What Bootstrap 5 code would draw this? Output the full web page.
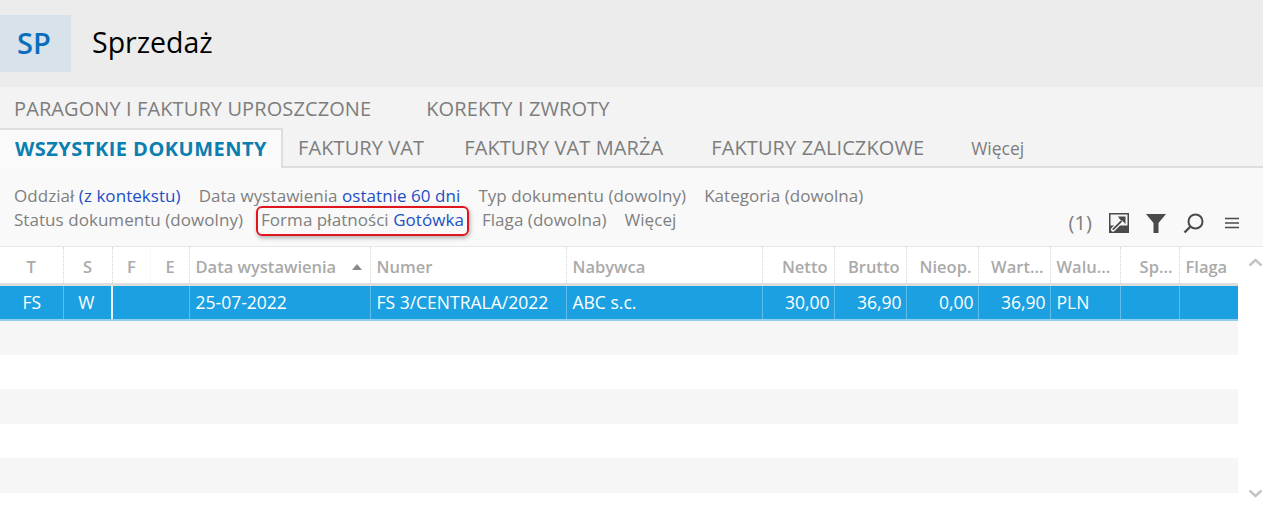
<!DOCTYPE html>
<html lang="pl"><head><meta charset="utf-8"><title>Sprzedaż</title>
<link href="https://cdn.jsdelivr.net/npm/bootstrap@5.3.0/dist/css/bootstrap.min.css" rel="stylesheet">
<style>
html,body{height:507px;overflow:hidden}
body{background:#fff;font-family:"Open Sans","Noto Sans",sans-serif;font-size:16px;color:#7a7a7a}
.topband{height:87px;background:#ececec;padding-top:15px}
.appbadge{width:71px;height:57px;background:#d7e2ea;color:#0a6ebd;font-size:29px;font-weight:600;padding-right:3px;padding-bottom:2px}
.apptitle{color:#000;font-size:28.500px;margin-left:21px;line-height:54px}
.tabband{height:81px;background:#f3f3f3;border-bottom:2px solid #dedede}
.tabrow{font-size:20px;color:#7d7d7d;letter-spacing:.1px}
.tabrow span{white-space:nowrap}
.t1{height:41px;padding:7px 0 0 14px;gap:55px}
.t2{height:40px}
.acttab{width:283px;height:40px;background:#fafafa;border:2px solid #dedede;border-bottom:0;border-left:0;color:#0a7fb0;font-weight:700;padding:0 0 0 15px;line-height:38px;letter-spacing:.48px;white-space:nowrap;box-sizing:border-box}
.t2 .x{line-height:40px;padding-left:15px}
.t2 .x2{padding-left:40px}
.t2 .x3{padding-left:48px}
.t2 .x4{padding-left:47px;font-size:17.500px;letter-spacing:0}
.filterband{height:79px;background:#f9f9f9;padding:16px 14px 0;font-size:17px;line-height:24px;position:relative;border-bottom:1px solid #e9e9e9;color:#808080;letter-spacing:.05px}
.fline{gap:18px;white-space:nowrap}
.fline b{font-weight:400;color:#1c4fc4}
.hilite{border:2px solid #e0161e;border-radius:6px;box-shadow:1px 2px 4px rgba(0,0,0,.3);padding:0 3px;margin:-2px -5px -4px -5px;height:30px;line-height:24px}
.tools{position:absolute;right:24px;top:45px;height:20px}
.tools svg{margin-left:17px}
.tools svg.mn{margin-left:21px}
.cnt{font-size:20px;color:#7d7d7d}
table.gridtbl{table-layout:fixed;width:1238px;margin:0;border-collapse:collapse;font-size:17.500px}
.gridtbl th,.gridtbl td{padding:0 5px 0 6px;white-space:nowrap;overflow:hidden;box-shadow:none;border:0}
.gridtbl thead th{height:37px;color:#aaa;font-weight:600;background:#fff;border-bottom:3px solid #dedede;border-right:1px dotted #d4d4d4;font-size:16.500px;vertical-align:middle;padding-top:5px}
.gridtbl thead th.endn{padding-right:6px}
.gridtbl thead th.ctr{padding-right:6px;padding-left:6px}
.gridtbl thead th.quiet{border-right-color:#f0f0f0}
.gridtbl thead th:last-child{border-right:0}
.gridtbl tbody td{height:34.600px;padding-top:0;padding-bottom:0;vertical-align:middle}
.gridtbl tbody td.text-end{padding-right:4px}
.gridtbl tbody tr.sel td{height:36px;background:#1ba1e2;color:#fff;border-right:1px solid #5dbdeb;border-bottom:2px solid #8fd0f0}
.gridtbl tbody tr.sel td.wedge{border-right:2px solid #e8f5fc;padding-right:7px;padding-left:5px}
.gridtbl tbody tr.sel td.quiet{border-right-color:#1ba1e2}
.gridtbl tbody tr.sel td:last-child{border-right:0}
.gridtbl tbody tr.sel td.wl{font-weight:500}
.gridtbl tbody tr.alt td{background:#f6f6f6}
.gridtbl tbody tr.pl td{background:#fff}
.sortmark{display:inline-block;border:5.500px solid transparent;border-top:0;border-bottom:6px solid #8a8a8a;margin-left:16px;vertical-align:3px}
.gridwrap{position:relative;height:259px}
.sbar{position:absolute;left:1238px;top:0;width:25px;height:259px}
.sbar svg{position:absolute;left:10px}
.sbar svg.up{top:11px}
.sbar svg.down{top:242px}
</style></head><body>
<div class="topband d-flex"><div class="appbadge d-flex align-items-center justify-content-center">SP</div><div class="apptitle">Sprzedaż</div></div>
<div class="tabband">
<div class="tabrow t1 d-flex"><span>PARAGONY I FAKTURY UPROSZCZONE</span><span>KOREKTY I ZWROTY</span></div>
<div class="tabrow t2 d-flex"><div class="acttab">WSZYSTKIE DOKUMENTY</div><span class="x">FAKTURY VAT</span><span class="x x2">FAKTURY VAT MARŻA</span><span class="x x3">FAKTURY ZALICZKOWE</span><span class="x x4">Więcej</span></div>
</div>
<div class="filterband">
<div class="fline d-flex"><span>Oddział <b>(z kontekstu)</b></span><span>Data wystawienia <b>ostatnie 60 dni</b></span><span>Typ dokumentu (dowolny)</span><span>Kategoria (dowolna)</span></div>
<div class="fline d-flex"><span>Status dokumentu (dowolny)</span><span class="hilite">Forma płatności <b>Gotówka</b></span><span>Flaga (dowolna)</span><span>Więcej</span></div>
<div class="tools d-flex align-items-center">
<span class="cnt">(1)</span>
<svg width="20" height="20" viewBox="0 0 20 20"><rect width="20" height="20" fill="#4a4a4a"/><rect x="1.500" y="1.500" width="17" height="11" fill="#f4f4f4"/><path d="M4 16.500 13 7.500" stroke="#fff" stroke-width="4.200" stroke-linecap="round"/><path d="M4.300 16.200 12 8.500" stroke="#4a4a4a" stroke-width="1.800" stroke-linecap="round"/><path d="M9 3.500h7.500V11l-2.500-2.500-3-2z" fill="#4a4a4a"/></svg>
<svg width="20" height="20" viewBox="0 0 20 20"><path d="M0 1h20l-7.500 9v10h-5V10z" fill="#4a4a4a"/></svg>
<svg width="21" height="21" viewBox="0 0 21 21"><circle cx="12.500" cy="8.500" r="7" fill="none" stroke="#4a4a4a" stroke-width="2"/><path d="M7.500 13.500 1.500 19.500" stroke="#4a4a4a" stroke-width="2.400"/></svg>
<svg class="mn" width="14" height="12" viewBox="0 0 14 12"><path d="M0 1.500h14M0 6h14M0 10.500h14" stroke="#4a4a4a" stroke-width="1.600"/></svg>
</div>
</div>
<div class="gridwrap">
<table class="table gridtbl">
<colgroup><col style="width:63px"><col style="width:49px"><col style="width:38px"><col style="width:39px"><col style="width:181px"><col style="width:196px"><col style="width:196px"><col style="width:72px"><col style="width:72px"><col style="width:72px"><col style="width:72px"><col style="width:70px"><col style="width:59px"><col style="width:59px"></colgroup>
<thead><tr><th class="text-center ctr">T</th><th class="text-center ctr">S</th><th class="text-center quiet">F</th><th class="text-center">E</th><th>Data wystawienia<span class="sortmark"></span></th><th>Numer</th><th>Nabywca</th><th class="text-end endn">Netto</th><th class="text-end endn">Brutto</th><th class="text-end endn">Nieop.</th><th class="text-end endn">Wart...</th><th>Walu...</th><th class="text-end endn">Sp...</th><th>Flaga</th></tr></thead>
<tbody>
<tr class="sel"><td class="text-center">FS</td><td class="text-center wl wedge">W</td><td class="quiet"></td><td></td><td>25-07-2022</td><td>FS 3/CENTRALA/2022</td><td>ABC s.c.</td><td class="text-end">30,00</td><td class="text-end">36,90</td><td class="text-end">0,00</td><td class="text-end">36,90</td><td>PLN</td><td></td><td></td></tr>
<tr class="alt"><td colspan="14"></td></tr><tr class="pl"><td colspan="14"></td></tr><tr class="alt"><td colspan="14"></td></tr><tr class="pl"><td colspan="14"></td></tr><tr class="alt"><td colspan="14"></td></tr>
</tbody></table>
<div class="sbar"><svg class="up" width="15" height="9" viewBox="0 0 15 9"><path d="M1.500 7.500 7.500 2l6 5.500" fill="none" stroke="#c4c4c4" stroke-width="2.400"/></svg><svg class="down" width="15" height="9" viewBox="0 0 15 9"><path d="M1.500 1.500l6 5.500 6-5.500" fill="none" stroke="#c4c4c4" stroke-width="2.400"/></svg></div>
</div>
</body></html>
